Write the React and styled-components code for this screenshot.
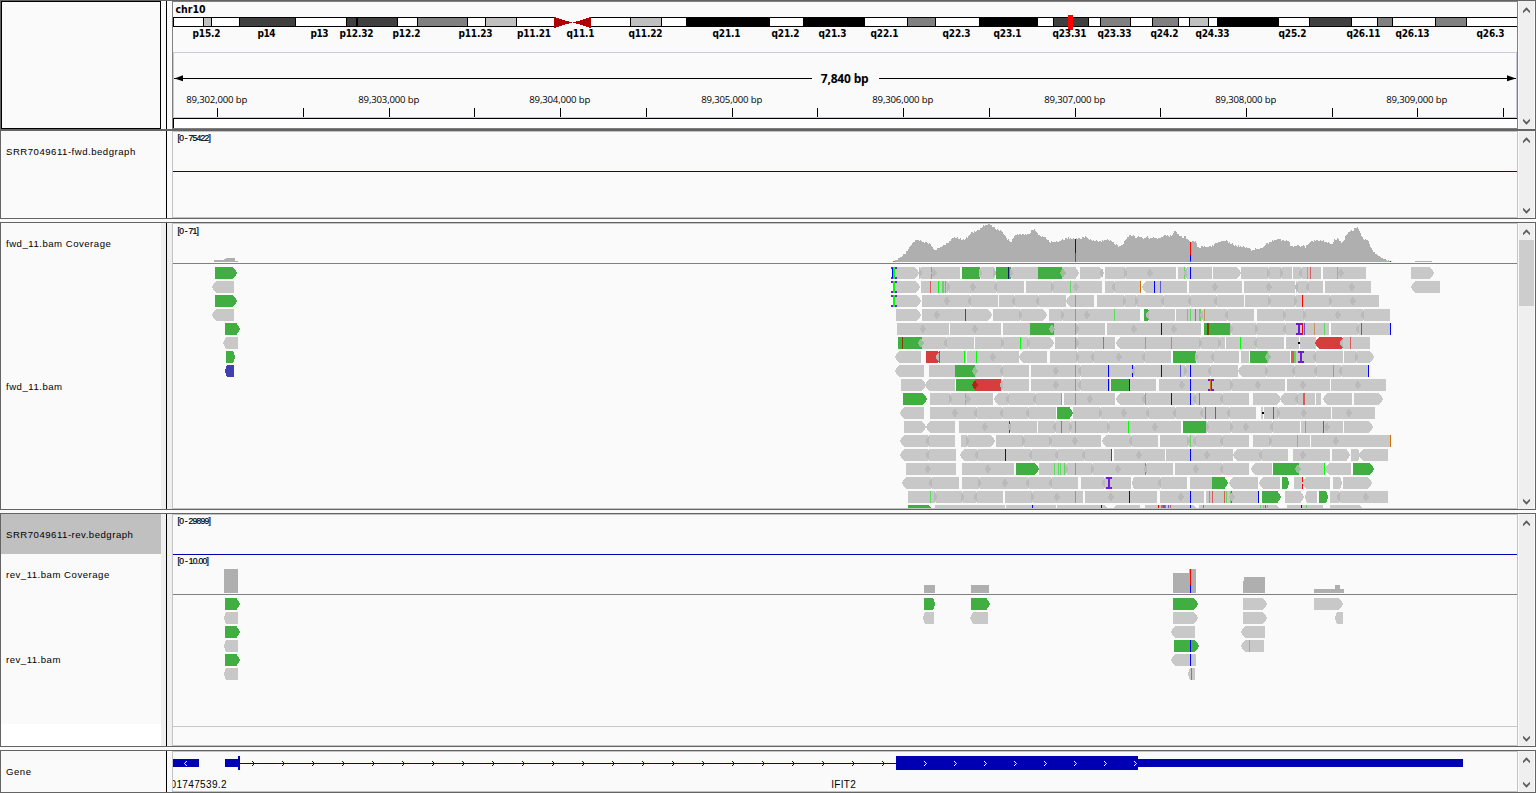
import React from 'react';
import styled, { createGlobalStyle } from 'styled-components';

const GlobalStyle = createGlobalStyle`
  html, body { margin: 0; padding: 0; background: #fafafa; overflow: hidden; }
  * { box-sizing: border-box; }
`;

const C = {
  read: '#c8c8c8', overlap: '#bababa', fwd: '#40ae40', bad: '#d63e3e', inv: '#4040ae',
  cov: '#afafaf', gene: '#0000b2', insertion: '#7319d8', frame: '#646464',
};

const Page = styled.div`
  width: 1536px;
  height: 793px;
  display: flex;
  flex-direction: column;
  background: #fafafa;
  font-family: 'Liberation Sans', Arial, sans-serif;
`;

const Panel = styled.section`
  height: ${p => p.$h}px;
  margin-bottom: ${p => p.$gap || 0}px;
  display: grid;
  grid-template-columns: 160px 5px 1px 5px 1346px 1px 15px 1px;
  grid-template-rows: minmax(0, 1fr);
  border: 1px solid ${C.frame};
`;

const Names = styled.div`
  display: flex;
  flex-direction: column;
  background: ${p => (p.$blank ? '#fff' : '#fafafa')};
  border: ${p => (p.$boxed ? '1px solid #000' : '0')};
`;

const TrackName = styled.div`
  height: ${p => p.$h}px;
  padding: ${p => p.$top}px 0 0 5px;
  flex: none;
  font-size: 9.6px;
  line-height: 12px;
  letter-spacing: 0.5px;
  white-space: nowrap;
  color: #000;
  background: ${p => (p.$selected ? '#c0c0c0' : '#fafafa')};
`;

const Strip = styled.div`
  background: ${p => (p.$shaded ? '#efefef' : '#fafafa')};
`;
const Divider = styled.div`
  background: #000;
`;
const Data = styled.div`
  border: 1px solid ${p => (p.$dark ? '#808080' : '#c4c4c4')};
  overflow: hidden;
  display: flex;
  flex-direction: column;
`;
const Canvas = styled.svg`
  display: block;
  flex: none;
  width: 1344px;
  height: ${p => p.$h}px;
`;
const RulerFrame = styled.div`
  height: 66px;
  border: 1px solid #c8c8d8;
`;
const SequenceStrip = styled.div`
  height: 10px;
  border-top: 1px solid #000;
  border-left: 1px solid #000;
  background: #fff;
`;
const ScrollBar = styled.div`
  grid-column: 7;
  display: flex;
  flex-direction: column;
  align-items: center;
  padding: 6px 0 4px;
  background: #efefef;
`;
const Thumb = styled.div`
  width: 15px;
  height: 66px;
  margin-top: 4px;
  background: #cdcdcd;
`;
const Arrow = styled.svg`
  display: block;
  width: 7px;
  height: 7px;
  margin-top: ${p => (p.$end ? 'auto' : 0)};
  transform: ${p => (p.$end ? 'scaleY(-1)' : 'none')};
`;

const ArrowHead = ({ end }) => (
  <Arrow $end={end} viewBox="0 0 7 7">
    <path d="M0 3.9 L3.5 0.3 L7 3.9 V6.3 L3.5 3 L0 6.3 Z" fill="#5c5c5c" />
  </Arrow>
);

function TrackPanel({ h, gap, names, blank, boxed, shaded, dark, thumb, children }) {
  return (
    <Panel $h={h} $gap={gap}>
      <Names $blank={blank} $boxed={boxed}>{names}</Names>
      <Strip $shaded={shaded} />
      <Divider />
      <Strip $shaded={shaded} />
      <Data $dark={dark}>{children}</Data>
      <ScrollBar>
        <ArrowHead />
        {thumb && <Thumb />}
        <ArrowHead end />
      </ScrollBar>
    </Panel>
  );
}

/* ---------- chromosome ideogram ---------- */

const K = '#000', D = '#404040', M = '#808080', L = '#c0c0c0', W = '#fff';
const BANDS = [
  [173, 203, W], [203, 211, L], [211, 239, W], [239, 295, D], [295, 346, W], [346, 356, D], [357, 397, D],
  [397, 417, W], [417, 467, M], [467, 485, W], [485, 516, L], [516, 554, W],
  [590, 630, W], [630, 661, L], [661, 686, W], [686, 769, K], [769, 803, W], [803, 864, K],
  [864, 907, W], [907, 935, M], [935, 979, W], [979, 1037, K], [1037, 1053, W], [1053, 1088, D],
  [1088, 1100, W], [1100, 1130, M], [1130, 1152, W], [1152, 1178, M], [1178, 1189, W], [1189, 1208, L],
  [1208, 1217, W], [1217, 1278, K], [1278, 1309, W], [1309, 1351, D], [1351, 1377, W], [1377, 1392, M],
  [1392, 1435, W], [1435, 1466, M], [1466, 1520, W],
];
const BAND_NAMES = [
  [206.5, 'p15.2'], [266.5, 'p14'], [319.5, 'p13'], [356.5, 'p12.32'], [406.5, 'p12.2'], [475.5, 'p11.23'],
  [534, 'p11.21'], [580.5, 'q11.1'], [645.5, 'q11.22'], [726.5, 'q21.1'], [785.5, 'q21.2'], [832.5, 'q21.3'],
  [884.5, 'q22.1'], [956.5, 'q22.3'], [1007.5, 'q23.1'], [1069.5, 'q23.31'], [1114.5, 'q23.33'],
  [1164.5, 'q24.2'], [1212.5, 'q24.33'], [1292.5, 'q25.2'], [1363.5, 'q26.11'], [1412.5, 'q26.13'], [1490.5, 'q26.3'],
];
const BAND_FONT = "'DejaVu Sans Condensed', 'DejaVu Sans', sans-serif";
const RULER_FONT = "'Open Sans', 'Noto Sans', sans-serif";

const Ideogram = () => (
  <Canvas $h={50} viewBox="173 2 1344 50">
    <text x="175.5" y="13" fontFamily={BAND_FONT} fontStretch="condensed" fontWeight="700" fontSize="10.5" textLength="30">chr10</text>
    <g shapeRendering="crispEdges">
      {BANDS.map(([a, b, c]) => (
        <rect key={a} x={a + 0.5} y="17.5" width={b - a} height="9" fill={c} stroke="#000" />
      ))}
      <path d="M554 17 L572 22.5 L554 28 Z M591 17 L573 22.5 L591 28 Z" fill="#b20000" />
      <rect x="1068" y="15" width="5" height="15" fill="#f00" />
    </g>
    {BAND_NAMES.map(([x, t]) => (
      <text key={t} x={x} y="37" textAnchor="middle" fontFamily={BAND_FONT} fontStretch="condensed" fontWeight="700" fontSize="10"
        textLength={{ 3: 18, 5: 28, 6: 34 }[t.length]}>{t}</text>
    ))}
  </Canvas>
);

const TICKS = [217, 303, 389, 474, 560, 646, 732, 817, 903, 989, 1075, 1160, 1246, 1332, 1417, 1503];

const Ruler = () => (
  <RulerFrame>
    <svg width="1342" height="64" viewBox="174 53 1342 64" style={{ display: 'block' }}>
      <g shapeRendering="crispEdges">
        <rect x="174" y="78" width="638" height="1" />
        <rect x="879" y="78" width="637" height="1" />
        {TICKS.map(x => <rect key={x} x={x} y="108" width="1" height="9" />)}
      </g>
      <path d="M174.5 78.5 L183 75.3 V81.3 Z M1516 78.5 L1507 75.3 V81.3 Z" />
      <text x="820.7" y="83" fontFamily={RULER_FONT} fontSize="12" fontWeight="700" textLength="48">7,840 bp</text>
      {TICKS.filter((_, i) => i % 2 === 0).map((x, i) => (
        <text key={x} x={x - 30.7} y="103" fontFamily={RULER_FONT} fontSize="9.6" textLength="61">{`89,30${i + 2},000 bp`}</text>
      ))}
    </svg>
  </RulerFrame>
);

const Range = ({ y, w, children }) => (
  <text x="177.5" y={y} fontSize="8.6" textLength={w} stroke="#000" strokeWidth="0.2">{children}</text>
);

/* ---------- alignments ---------- */

const MARK = {
  G: '#00ff00', B: '#0000ff', R: '#ff0000', O: '#d17105', N: '#804000', K: '#0a1e64',
  g: '#5ad95a', b: '#5a5ad9', r: '#d95a5a', o: '#c29361',
};
const FILL = { g: C.fwd, r: C.bad, b: C.inv };

/* stepped outline of a read's pointed end, top to bottom; s is the direction it points in */
function tip(x, y, n, s) {
  const cy = y + 6;
  if (n <= 2) return `H${x - 2 * s} V${y + 1} H${x - s} V${cy - 2} H${x} V${cy + 2} H${x - s} V${y + 11} H${x - 2 * s} V${y + 12}`;
  return `H${x - n * s} L${x - 2 * s} ${cy - 3} H${x - s} V${cy - 1} H${x} V${cy + 1} H${x - s} V${cy + 3} H${x - 2 * s} L${x - n * s} ${y + 12}`;
}

/*
 * One row of packed reads, as space separated tokens; x counts thirds of a pixel from `ox`.
 *   [g|r|b][<]a-b[>]   read, coloured by pair, with pointed ends
 *   dN lN pN           overlap of two reads: diamond, left point, right point
 *   m<colour>N[xW]     mismatched base, W pixels wide
 *   IN JN kN           insertion, wide insertion, deletion
 */
function Row({ ox, y, spec }) {
  const px = v => ox + Math.floor(Number(v) / 3 + 0.01);
  const cy = y + 6;
  return spec.split(' ').map((t, i) => {
    let m = t.match(/^([grb]?)(<?)(\d+)-(\d+)(>?)$/);
    if (m) {
      const a = px(m[3]), b = px(m[4]);
      const n = Math.min(4, Math.max(2, Math.round((b - a) / 6)));
      const mid = Math.floor((a + b) / 2);
      const right = m[5] ? tip(b, y, n, 1) : `H${b} V${y + 12}`;
      const left = m[2] ? tip(a, y, n, -1) : `H${a} V${y + 12}`;
      return (
        <path key={i} fill={FILL[m[1]] || C.read}
          d={`M${mid} ${y} ${right} H${mid} Z M${mid} ${y} ${left} H${mid} Z`} />
      );
    }
    m = t.match(/^([dlpD])(\d+)$/);
    if (m) {
      const x = px(m[2]);
      if (m[1] === 'd') return <path key={i} fill={C.overlap} d={`M${x} ${cy - 5} L${x + 3} ${cy} L${x} ${cy + 5} L${x - 3} ${cy} Z`} />;
      if (m[1] === 'D') return <path key={i} fill="#98c098" d={`M${x} ${cy - 5} L${x + 3} ${cy} L${x} ${cy + 5} L${x - 3} ${cy} Z`} />;
      const s = m[1] === 'l' ? -1 : 1;
      return (
        <g key={i}>
          <path fill={C.overlap} d={`M${x - s} ${cy - 4} H${x} L${x + 2 * s} ${cy - 1} V${cy + 1} L${x} ${cy + 4} H${x - s} Z`} />
          <path fill="#f2f2f2" d={`M${x} ${y} h1 v1 h-1 Z M${x} ${y + 11} h1 v1 h-1 Z`} />
        </g>
      );
    }
    m = t.match(/^m(\w)(\d+)(?:x(\d))?$/);
    if (m) return <rect key={i} x={px(m[2])} y={y} width={m[3] || 1} height="12" fill={MARK[m[1]]} />;
    m = t.match(/^([IJk])(\d+)$/);
    const x = px(m[2]);
    if (m[1] === 'I') return <path key={i} fill={C.insertion} d={`M${x - 3} ${y} h6 v2 h-2 v8 h2 v2 h-6 v-2 h2 v-8 h-2 Z`} />;
    if (m[1] === 'J') return (
      <g key={i}>
        <path fill={C.insertion} d={`M${x - 3} ${y} h6 v2 h-6 Z M${x - 3} ${y + 10} h6 v2 h-6 Z`} />
        <rect x={x - 1} y={y} width="2" height="12" fill="#0f0" />
      </g>
    );
    return (
      <g key={i}>
        <rect x={x} y={y} width="1" height="12" fill="#fafafa" />
        <rect x={x - 1} y={cy - 1} width="2" height="2" />
      </g>
    );
  });
}

const LEFT_ROWS = [
  'g177-243>', '<168-234', 'g177-243>', '<168-234', 'g207-252>', '<201-246', 'g210-237>', 'b<207-234 mN225',
];

const ROWS_A = [
  '42-118> 118-240 p120 mo154 d162 g246-300 300-346 p302 p344 g348-393 mK385 393-474 p394 g474-548 548-599> D549 600-673> l668 675-780 p735',
  '45-120> 123-432 mr151 mG175 mg186x2 mo196 p206 d280 l350 438-666 p516 mg571 d590 675-780 l704',
  '45-125> 126-354 d203 l272 357-558 l402 l476 <558-642 mG586 651-780 p733 l772',
  '48-124> 126-338> d173 mR256 339-503> p421 507-780 p547 mG586 d622 mg703',
  '51-207 d129 210-363 d287 369-450 g450-522 522-675 D517 mG586 p592 681-780 d762',
  'g54-126 mN67 126-282 D124 l200 285-523> p367 p444 mG421 525-705 mG586 p592 mO670 <708-780',
  '<46-123 r138-180 180-258 l175 mG253 261-418 mG289 d340 <418-501 510-780 p592 l640 d718',
  '<46-132 147-225 g225-287 287-447 D285 l367 453-780 d530 mG586 l601 mB685 mB757',
  '63-138> <137-225 g228-287 r287-363 363-447 l367 453-690 d530 mG586 l601 mB685 g693-747 747-780 mK748 l756',
  'g69-141> 150-339 p212 mg256 d265 <342-543 l386 l466 mo544 552-705 mG586 d631 <708-780',
  '<60-132 150-528 d225 l289 l366 l446 g531-579> 579-780 p660 d734',
  '72-138> <138-225 237-471 d316 mR388 l391 474-780 l526 mO544 p571 mG586 p685 mG745',
  '<60-225 l144 243-347> p262 348-663 p430 p511 d587 <667-780',
  '<60-228 l146 <240-694 l293 mB376 l453 l533 l612 mR694 702-780 l775',
  '78-228 d146 246-402 d325 g408-477> 477-780 mg523 mg535 mg541 mg553 p558 mG586 p638 d716',
  '<66-237 l154 246-594 p298 d376 l446 l514 603-753 l672 I687 <757-780',
  '84-369 mg151 p167 p248 l288 375-609 p458 d533 mG586 615-780 d693 mB748',
  'g84-159> 165-375 378-528 mB457 531-687> mB664 <696-780',
];

const ROWS_B = [
  '0-138 d60 144-246 mg163 l169 mB181 249-333> 333-486 p414 p453 489-573 l515 mg532 mr541 579-708 mg622 d634 843-912>',
  '0-30 mO31 <36-171 mB73 mb91 177-336 d257 342-495 d419 498-579 l502 l535 585-723 d666 <843-930',
  '0-342 p20 l101 l182 l260 345-747 p419 p496 mR517 p601 d671',
  '0-30 g42-57 57-135 l54 138-372 mg172 mg181 mr196 mg208x2 l218 mo223 l292 381-780 p464 p523 d626 l700',
  '0-213 d12 mB94 d133 g222-300 mN232x2 300-597 p304 p380 l466 I507 mR517 mb523 mo553 mg583 603-780 l686 mb694 mB781',
  '0-285 mo46 mG124 p210 p267 288-462 mG331 l380 468-558 k508 r<556-642 639-720 l638 mr661',
  '0-123 l42 g129-200 200-327 p200 l250 333-357 g360-413 413-482 mo412 D416 mr484x3 mg493x2 498-640 I513 l555 642-733> p678',
  '0-324 mB7 l12 mB94 mb151 p165 mB181 l242 <324-717 p410 l492 l560 mo610 l634 mB715',
  '0-78 87-465 d158 mB181 I243 mO241 p305 d386 471-600 d519 603-768 d686',
  '0-357 l43 mo46 mB124 mB181 l195 mr208 l277 369-453> <450-555 l503 mr520x2 558-573 <579-666 672-759>',
  '0-378 l54 l137 l218 mr226 mb256 l297 393-603 k399 mb430 p445 d523 606-735 d657',
  '0-153 d75 g159-228 228-510 p233 p304 d350 l428 513-639 mo526 mb580 d592 642-729>',
  '0-84 l3 90-357 p175 mg181 l195 l277 369-540 p421 mg502 543-697 d620 mB697 698-781 mO781',
  '0-105 d28 108-309 mB181 d231 <309-474 l393 489-600 d519 606-660> 663-690> <687-774',
  '0-129 mO46 l50 135-357 d200 l277 <363-426 g429-507 507-583 D506 mG583 <585-663 g669-732>',
  '0-3 <6-171 l91 180-246 g246-294> <297-384 <387-450 g456-477> 492-517 mR517 <518-600 609-637> 639-726>',
  '0-81 90-222 d155 mB181 228-386 mo238 mr247 mr283 mg288 mg300 mb304 d308 mB385 g396-453> 465-522> <525-561 g567-594> 600-774 l628 d708',
  '0-27 45-204> mR85 mr93x2 mb99x2 mr105 mb115 mr121 mB181 207-455> mr220 mg391 mg400 mb406 mg412 471-579 mB514 mg529 600-702>',
];

/* coverage outline: x and depth edge, three units to the pixel */
const PROFILE_A = [
  [42, 129], [48, 126], [60, 118], [72, 108], [78, 101], [84, 93], [90, 84], [96, 76], [104, 69], [110, 64], [116, 68], [130, 72],
  [150, 77], [156, 90], [165, 97], [170, 92], [180, 87], [190, 82], [200, 76], [208, 72], [213, 62], [220, 60], [228, 58],
  [240, 63], [250, 66], [262, 58], [270, 46], [280, 41], [290, 39], [300, 32], [308, 23], [320, 20], [328, 18], [334, 24],
  [345, 33], [362, 38], [372, 51], [380, 62], [388, 68], [392, 77], [397, 60], [405, 51], [418, 48], [435, 50], [448, 48],
  [452, 39], [462, 34], [470, 45], [476, 52], [490, 57], [500, 62], [508, 72], [530, 72], [545, 66], [556, 60], [575, 62],
  [600, 61], [605, 58], [618, 56], [624, 64], [640, 67], [650, 68], [660, 70], [672, 66], [690, 66], [700, 74], [710, 82],
  [718, 86], [728, 78], [738, 62], [748, 50],
];
const PROFILE_B = [
  [0, 53], [8, 50], [18, 62], [22, 54], [30, 57], [40, 61], [50, 57], [60, 61], [70, 58], [82, 62], [95, 56], [105, 51],
  [118, 54], [128, 50], [131, 37], [140, 44], [148, 54], [158, 59], [165, 54], [170, 64], [180, 71], [197, 70], [200, 85],
  [205, 89], [215, 84], [235, 87], [250, 81], [260, 73], [275, 70], [286, 67], [292, 71], [305, 78], [320, 84], [335, 86],
  [345, 88], [358, 92], [365, 97], [375, 93], [390, 92], [400, 86], [410, 76], [425, 69], [440, 65], [446, 61], [452, 66],
  [475, 68], [480, 84], [492, 86], [505, 80], [510, 88], [515, 80], [525, 87], [530, 82], [538, 73], [555, 66], [575, 68],
  [590, 74], [605, 78], [612, 66], [622, 60], [632, 75], [640, 68], [648, 50], [655, 40], [668, 39], [673, 31], [680, 27],
  [684, 33], [690, 44], [697, 62], [712, 67], [718, 80], [724, 92], [732, 105], [740, 111], [750, 117], [760, 122],
  [775, 127], [783, 131],
];
const PROFILE = [
  ...PROFILE_A.map(([x, y]) => [880 + x / 3, 218 + y / 3]),
  ...PROFILE_B.map(([x, y]) => [1130 + x / 3, 218 + y / 3]),
];

/* depth varies by a read or so from base to base */
const FLICKER = [0, 0.4, -0.6, 0, 0.7, -0.3, 0.5, 0, -0.7, 0.3, 0.8, -0.5, 0, 0.6, -0.8, 0.2, 0];

function coveragePath() {
  let d = 'M894 262';
  let k = 0;
  for (let x = 894; x < 1391; x++) {
    while (k < PROFILE.length - 2 && PROFILE[k + 1][0] < x) k++;
    const [x0, y0] = PROFILE[k], [x1, y1] = PROFILE[k + 1];
    const f = Math.min(1, Math.max(0, (x - x0) / (x1 - x0)));
    const top = y0 + (y1 - y0) * f + FLICKER[x % FLICKER.length];
    d += ` V${Math.min(261, Math.round(top))} H${x + 1}`;
  }
  return d + ' V262 Z';
}
const COVERAGE = coveragePath();

const ForwardReads = () => (
  <Canvas $h={284} viewBox="173 224 1344 284">
    <g shapeRendering="crispEdges">
      <path fill={C.cov} d={COVERAGE} />
      <path fill={C.cov} d="M214 262 V260 H224 V259 H226 V258 H235 V261 H238 V262 Z M1415 261 H1432 V262 H1415 Z" />
      <rect x="1075" y="239" width="1" height="14" fill="#00f" />
      <rect x="1075" y="253" width="1" height="9" fill="#009600" />
      <rect x="1190" y="242" width="1" height="13" fill="#f00" />
      <rect x="1190" y="255" width="1" height="6" fill="#00f" />
      <rect x="1190" y="261" width="1" height="1" fill="#009600" />
      <rect x="893" y="261" width="2" height="1" fill="#d17105" />
      <rect x="1390" y="261" width="1" height="1" fill="#f00" />
      <rect x="173" y="263" width="1344" height="1" fill="#808080" />
      {LEFT_ROWS.map((s, i) => <Row key={i} ox={156} y={267 + i * 14} spec={s} />)}
      {ROWS_A.map((s, i) => <Row key={i} ox={880} y={267 + i * 14} spec={s} />)}
      {ROWS_B.map((s, i) => <Row key={i} ox={1130} y={267 + i * 14} spec={s} />)}
      {[0, 1, 2].map(i => <Row key={i} ox={880} y={267 + i * 14} spec="J42" />)}
      <rect x="892" y="268" width="1" height="10" fill="#00f" />
      <path d="M975 380 L978 385 L975 390 L972 385 Z" fill="#a82a14" />
    </g>
    <Range y={233.5} w={21.5}>[0 - 71]</Range>
  </Canvas>
);

const REV_ROWS = [
  'g156-201> g2253-2286> g2394-2451> g3000-3075> 3210-3282> 3423-3510>',
  '<153-195 <2250-2283 <2391-2445 3000-3075> 3210-3282> <3486-3510',
  'g156-201> <2994-3066 <3204-3276',
  '<153-195 g3003-3078> mB3051 <3204-3273 mg3228',
  'g156-201> <2994-3069 mB3051',
  '<153-195 <3045-3066 mr3054',
];

const ReverseReads = () => (
  <Canvas $h={230} viewBox="173 515 1344 230">
    <g shapeRendering="crispEdges">
      <rect x="173" y="554" width="1344" height="1" fill={C.gene} />
      <path fill={C.cov} d="M224 593 V569 H238 V593 Z M924 593 V585 H935 V593 Z M971 593 V585 H989 V593 Z M1173 593 V573 H1189 V569 H1196 V593 Z M1243 593 V581 H1244 V577 H1265 V593 Z M1314 593 V589 H1335 V585 H1340 V589 H1344 V593 Z" />
      <rect x="1190" y="569" width="1" height="16" fill="#f00" />
      <rect x="1190" y="585" width="1" height="8" fill="#00f" />
      <rect x="173" y="594" width="1344" height="1" fill="#808080" />
      {REV_ROWS.map((s, i) => <Row key={i} ox={173} y={598 + i * 14} spec={s} />)}
      <rect x="173" y="726" width="1344" height="1" fill="#c8c8c8" />
    </g>
    <Range y={524.3} w={33.5}>[0 - 29899]</Range>
    <Range y={564.3} w={31.5}>[0 - 10.00]</Range>
  </Canvas>
);

const steps = (from, to) => Array.from({ length: Math.floor((to - from) / 30) + 1 }, (_, i) => from + i * 30);

const Genes = () => (
  <Canvas $h={39} viewBox="173 752 1344 39">
    <g fill={C.gene} shapeRendering="crispEdges">
      <rect x="173" y="759" width="26" height="8" />
      <rect x="225" y="759" width="14" height="8" />
      <rect x="238" y="756" width="2" height="14" />
      <rect x="240" y="763" width="656" height="1" />
      <rect x="896" y="756" width="242" height="14" />
      <rect x="1138" y="759" width="325" height="8" />
    </g>
    <g fill="none" strokeWidth="1">
      <path stroke="#fff" d="M186.8 761 L184.5 763.5 L186.8 766" />
      {steps(252, 883).map(x => <path key={x} stroke={C.gene} d={`M${x} 761 L${x + 2.5} 763.5 L${x} 766`} />)}
      {steps(924, 1135).map(x => <path key={x} stroke="#fff" d={`M${x} 761 L${x + 2.5} 763.5 L${x} 766`} />)}
    </g>
    <text x="170.5" y="788" fontSize="10" textLength="56">01747539.2</text>
    <text x="831.3" y="788" fontSize="10" textLength="24.5">IFIT2</text>
  </Canvas>
);

export default function App() {
  return (
    <>
      <GlobalStyle />
      <Page>
        <TrackPanel h={130} boxed dark>
          <Ideogram />
          <Ruler />
          <SequenceStrip />
        </TrackPanel>

        <TrackPanel h={89} gap={3} names={<TrackName $h={87} $top={15}>SRR7049611-fwd.bedgraph</TrackName>}>
          <Canvas $h={85} viewBox="173 132 1344 85">
            <rect x="173" y="171" width="1344" height="1" fill={C.gene} shapeRendering="crispEdges" />
            <Range y={141.3} w={33.5}>[0 - 75422]</Range>
          </Canvas>
        </TrackPanel>

        <TrackPanel
          h={288} gap={3} shaded thumb
          names={<>
            <TrackName $h={41} $top={15}>fwd_11.bam Coverage</TrackName>
            <TrackName $h={245} $top={117}>fwd_11.bam</TrackName>
          </>}
        >
          <ForwardReads />
        </TrackPanel>

        <TrackPanel
          h={234} gap={3} shaded blank
          names={<>
            <TrackName $h={40} $top={15} $selected>SRR7049611-rev.bedgraph</TrackName>
            <TrackName $h={41} $top={15}>rev_11.bam Coverage</TrackName>
            <TrackName $h={129} $top={59}>rev_11.bam</TrackName>
          </>}
        >
          <ReverseReads />
        </TrackPanel>

        <TrackPanel h={43} names={<TrackName $h={41} $top={15}>Gene</TrackName>}>
          <Genes />
        </TrackPanel>
      </Page>
    </>
  );
}
